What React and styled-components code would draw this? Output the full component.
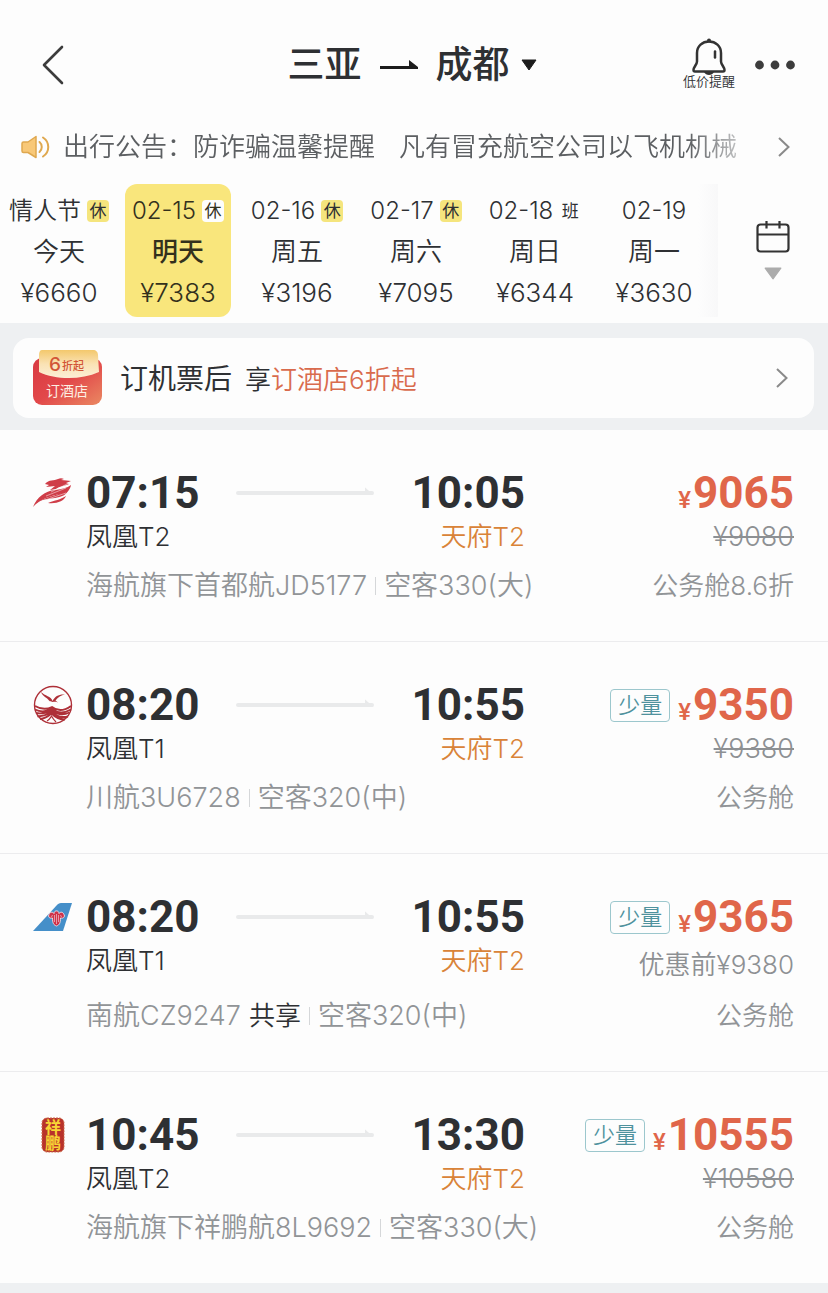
import React, { useState } from "react";
import styled, { createGlobalStyle, css } from "styled-components";

const GlobalStyle = createGlobalStyle`
  * {
    box-sizing: border-box;
  }
  body {
    margin: 0;
    background-color: #eef0f2;
    color: #2e3033;
    font-family: Inter, "Noto Sans CJK SC", sans-serif;
    font-size: 26px;
    font-weight: 350;
  }
  button {
    padding: 0;
    border: 0;
    background: none;
    color: inherit;
    font: inherit;
    cursor: pointer;
  }
  a {
    color: inherit;
    text-decoration: none;
  }
  svg {
    display: block;
    flex-shrink: 0;
  }
`;

const Top = styled.div`
  padding-bottom: 6px;
  background-color: #fdfdfd;
`;

const Header = styled.header`
  display: grid;
  grid-template-columns: 1fr auto 1fr;
  align-items: center;
  height: 124px;
  padding: 6px 32px 0 28px;
`;

const BackButton = styled.button`
  justify-self: start;
  padding-left: 14px;
`;

const RouteButton = styled.button`
  display: flex;
  align-items: center;
  gap: 18px;
`;

const City = styled.span`
  font-size: 37px;
  line-height: 48px;
  font-weight: 500;
`;

const Destination = styled.span`
  display: flex;
  align-items: center;
  gap: 11px;
`;

const HeaderActions = styled.div`
  display: flex;
  align-items: center;
  justify-content: flex-end;
  gap: 19px;
`;

const AlertButton = styled.button`
  display: flex;
  flex-direction: column;
  align-items: center;
  padding-bottom: 6px;
  font-size: 13px;
  line-height: 12px;
`;

const Notice = styled.a`
  display: flex;
  align-items: center;
  height: 46px;
  padding: 0 38px 0 21px;
  color: #5c5f62;
`;

const NoticeText = styled.span`
  display: flex;
  flex: 1;
  gap: 24px;
  margin: 0 36px 0 13px;
  overflow: hidden;
  line-height: 40px;
  white-space: nowrap;
  mask-image: linear-gradient(to right, #000 92%, transparent 104%);
`;

const DateBar = styled.nav`
  display: flex;
  margin-top: 14px;
`;

const Dates = styled.div`
  display: grid;
  flex: 1;
  grid-template-columns: repeat(6, minmax(0, 1fr));
  column-gap: 13px;
  padding: 0 11px 0 6px;
  background: linear-gradient(to left, #f8f8f9, #fdfdfd 20px);
`;

const DateTab = styled.button`
  display: flex;
  flex-direction: column;
  align-items: center;
  padding: 6px 0 4px;
  border-radius: 12px;
  font-size: 24px;
  line-height: 41px;
  white-space: nowrap;
  ${(props) =>
    props.$active &&
    css`
      background-color: #f9e67c;
      color: #33301c;
    `}
`;

const DateLine = styled.span`
  display: flex;
  align-items: center;
  gap: 6px;
`;

const Weekday = styled.span`
  font-size: 26px;
  font-weight: ${(props) => (props.$active ? 500 : 350)};
`;

const DayPrice = styled.span`
  font-size: 26px;
`;

const Tag = styled.span`
  width: 22px;
  border-radius: 4px;
  background-color: ${(props) => props.$bg};
  font-size: 17px;
  line-height: 22px;
  font-weight: 400;
  text-align: center;
`;

const CalendarButton = styled.button`
  display: flex;
  flex-direction: column;
  align-items: center;
  justify-content: center;
  gap: 14px;
  width: 110px;
`;

const Promo = styled.a`
  display: flex;
  align-items: center;
  height: 80px;
  margin: 15px 14px 12px 13px;
  padding: 0 26px 0 20px;
  border-radius: 16px;
  background-color: #fdfdfd;
`;

const PromoText = styled.span`
  flex: 1;
  margin-left: 18px;
  padding-top: 3px;
  line-height: 40px;
`;

const PromoTitle = styled.strong`
  margin-right: 13px;
  font-size: 28px;
  font-weight: 400;
`;

const Highlight = styled.span`
  color: #d96b4d;
`;

const Flights = styled.ul`
  margin: 0 0 10px;
  padding: 0;
  list-style: none;
`;

const Flight = styled.li`
  display: flex;
  padding: 39px 34px 35px 33px;
  background-color: #fdfdfd;
  & + & {
    border-top: 1px solid #ececee;
  }
`;

const Logo = styled.div`
  display: flex;
  align-items: center;
  justify-content: center;
  width: 40px;
  height: 48px;
  margin-right: 13px;
`;

const Info = styled.div`
  flex: 1;
`;

const Line = styled.div`
  display: flex;
  align-items: flex-start;
  justify-content: space-between;
  line-height: 40px;
  white-space: nowrap;
`;

const DetailLine = styled(Line)`
  margin-top: ${(props) => (props.$tight ? 7 : 9)}px;
  color: #919497;
`;

const Route = styled.div`
  display: flex;
  flex: 0 0 62%;
  align-items: center;
  justify-content: space-between;
`;

const Time = styled.time`
  font-family: Roboto, sans-serif;
  font-size: 44px;
  line-height: 48px;
  font-weight: 700;
`;

const RouteArrow = styled.span`
  position: relative;
  flex: 1;
  height: 4px;
  margin: 0 38px 0 37px;
  border-radius: 2px;
  background-color: #e9eaeb;
  &::after {
    content: "";
    position: absolute;
    right: 0;
    bottom: 0;
    width: 9px;
    height: 8px;
    background-color: #e9eaeb;
    clip-path: polygon(0 0, 100% 100%, 0 100%);
  }
`;

const Arrival = styled.span`
  color: #d98338;
`;

const Price = styled.strong`
  display: flex;
  align-items: baseline;
  color: #e0664a;
  font-family: Roboto, sans-serif;
  font-size: 44px;
  line-height: 48px;
  font-weight: 700;
`;

const Currency = styled.span`
  margin-right: 2px;
  font-size: 24px;
  line-height: 24px;
  font-weight: 500;
`;

const Fare = styled.div`
  display: flex;
  align-items: center;
  gap: 8px;
`;

const Few = styled.span`
  padding: 0 7px;
  border: 1px solid #9cc7cd;
  border-radius: 4px;
  color: #4f929d;
  font-size: 22px;
  line-height: 31px;
`;

const OldPrice = styled.del`
  color: #8d9093;
  font-size: 27px;
`;

const BeforeDiscount = styled.span`
  color: #8d9093;
  line-height: 48px;
`;

const Details = styled.span`
  display: flex;
  align-items: center;
  font-size: 27px;
`;

const Shared = styled.span`
  margin-left: 8px;
  color: #2e3033;
  font-size: 26px;
`;

const Divider = styled.span`
  width: 1px;
  height: 18px;
  margin: 0 8px;
  background-color: #d5d7d9;
`;

const ChevronRight = ({ color }) => (
  <svg width="12" height="20" viewBox="0 0 12 20" fill="none" stroke={color} strokeWidth="2">
    <path d="M1 1l9.500 9L1 19" />
  </svg>
);

const BackIcon = () => (
  <svg width="22" height="40" viewBox="0 0 22 40" fill="none" stroke="#3c3c3c" strokeWidth="2.600" strokeLinecap="round" strokeLinejoin="round">
    <path d="M20 2L2 20l18 18" />
  </svg>
);

const TitleArrow = () => (
  <svg width="38" height="10" viewBox="0 0 38 10" fill="#1c1c1c">
    <path d="M0 6h29V0l9 7v2H0z" />
  </svg>
);

const Caret = ({ width, height, color }) => (
  <svg width={width} height={height} viewBox="0 0 16 12" preserveAspectRatio="none">
    <path d="M1 1h14L8 11z" fill={color} stroke={color} strokeLinejoin="round" />
  </svg>
);

const BellIcon = () => (
  <svg width="34" height="37" viewBox="0 0 34 37" fill="none" stroke="#333" strokeWidth="2.500" strokeLinecap="round" strokeLinejoin="round">
    <path d="M17 3.500C10.500 3.500 5 8 5 15v8.500c0 3-3.500 5.500-3.500 8.500 0 1 .6 1.500 1.500 1.500h28c.9 0 1.500-.5 1.500-1.500 0-3-3.500-5.500-3.500-8.500V15c0-7-5.500-11.500-12-11.500z" />
    <path d="M23 13.500v6" />
    <circle cx="17" cy="2.500" r="2" fill="#333" stroke="none" />
    <path d="M12 34h10c-1 2-2.800 3-5 3s-4-1-5-3z" fill="#333" stroke="none" />
  </svg>
);

const MoreIcon = () => (
  <svg width="42" height="10" viewBox="0 0 42 10" fill="#3c3c3c">
    <circle cx="5.500" cy="5" r="4.400" />
    <circle cx="21" cy="5" r="4.400" />
    <circle cx="36.500" cy="5" r="4.400" />
  </svg>
);

const SpeakerIcon = () => (
  <svg width="29" height="24" viewBox="0 0 29 24" fill="none" stroke="#dfa84f" strokeWidth="2" strokeLinecap="round" strokeLinejoin="round">
    <path d="M2.500 7h4.500l8-5.500v21L7 17.500H2.500c-.8 0-1.500-.7-1.500-1.500V8.500C1 7.700 1.700 7 2.500 7z" fill="#f8c878" strokeWidth="1.500" />
    <path d="M18.500 7c3 2.500 3 7.500 0 10" />
    <path d="M22 2.500c7 4.500 7 14.500 0 19" />
  </svg>
);

const CalendarIcon = () => (
  <svg width="34" height="32" viewBox="0 0 34 32" fill="none" stroke="#333" strokeWidth="2.200">
    <rect x="1.500" y="3.500" width="31" height="27" rx="3" />
    <path d="M1.500 13.500h31M10.500 0v7.500M23.500 0v7.500" />
  </svg>
);

const CouponIcon = () => (
  <svg width="69" height="56" viewBox="0 0 69 56">
    <defs>
      <linearGradient id="couponRed" x1="0" y1="0" x2="1" y2="1">
        <stop offset="0" stopColor="#d83a42" />
        <stop offset="0.5" stopColor="#e2484a" />
        <stop offset="1" stopColor="#ea8962" />
      </linearGradient>
      <linearGradient id="couponFlap" x1="0" y1="0" x2="0" y2="1">
        <stop offset="0" stopColor="#f3c86c" />
        <stop offset="0.5" stopColor="#fae2b4" />
        <stop offset="1" stopColor="#fceed6" />
      </linearGradient>
    </defs>
    <rect y="8" width="69" height="47" rx="9" fill="url(#couponRed)" />
    <path d="M9 0h51c3 0 5 2 5 5l1 17c-18 8-43 8-60 0V5c0-3 1-5 3-5z" fill="url(#couponFlap)" />
    <text x="16" y="21" fill="#d25536" fontSize="19" fontWeight="500">6</text>
    <text x="29" y="20" fill="#d25536" fontSize="11" fontWeight="500">折起</text>
    <text x="34" y="46" fill="#fdf0e4" fontSize="14" fontWeight="400" textAnchor="middle">订酒店</text>
  </svg>
);

const CapitalLogo = () => (
  <svg width="40" height="30" viewBox="0 0 40 30" fill="#cf3d48">
    <path d="M0 29C4 19 12 13 22 12c7-1 12-2 16-5-1 6-5 8-11 9-10 2-20 5-27 13z" />
    <path d="M7 23c8-5 18-5 29-12-2 6-8 8-14 9-6 1-10 1-15 3z" />
    <path d="M15 25c7-3 12-3 18-7-2 5-9 8-18 7z" />
    <path d="M12 6c4-5 9-3 13-5 2-1 4-1 6 0l-3 1c4 0 7 1 10 1l-5 2 3 1c-5 2-9 2-13 5l-6 1 5-4-9 1 3-2z" />
    <path d="M18 14l18-9M13 18l20-8M9 23l24-8" stroke="#fdfdfd" strokeWidth="0.500" fill="none" />
  </svg>
);

const SichuanLogo = () => (
  <svg width="40" height="40" viewBox="0 0 40 40" fill="none" stroke="#ae3038">
    <circle cx="20" cy="20" r="18.500" strokeWidth="1.400" />
    <path d="M8 7c4 4 10 4 11.500 9C22 11 26 9 32 9.500c-4 .8-7 2.500-9.500 6L25 17.500c-3.500-1.500-7 .5-9-2C14 12.500 10 12 8 7z" fill="#ae3038" stroke="none" />
    <path d="M2 21c7 4 12 3.500 17 1 5 4 12 4 19-1M2 24.500c7 3.500 12 1.500 17-.5 5 4 12 4.500 19 .5M3 28c6 1.500 11-.5 16-2.500 5 4 11 5 17.500 2M4.500 31.200c6 .5 10-1.700 14-4.200 4 4 10 6 16.500 4.500M7 34c5-.5 8-2.500 11.500-5.500C22 32 26 34.500 32 34.500" strokeWidth="1.900" />
    <path d="M14 36c2.500-1 3-3 4.500-5 1 2 2.500 4 4.500 6" strokeWidth="1.200" />
  </svg>
);

const SouthernLogo = () => (
  <svg width="40" height="28" viewBox="0 0 40 28">
    <path d="M0 28L24 2c1-1 2-2 4-2h11L30 28z" fill="#458fc9" />
    <path d="M15.500 13c1-4.500 4-4.500 5.500-2.500 0-3.500 5-3.500 5 0 1.500-2 4.500-2 5.500 2.500-1 3-3 2-4 2 0 5-1 7-4 8-3-1-4-3-4-8-1 0-3 1-4-2z" fill="#cf3149" stroke="#f1dfe5" strokeWidth="0.900" />
    <path d="M21.500 12v7M23.500 11v10M25.500 12v7M18 13.500l2-1M29 13.500l-2-1" stroke="#f1dfe5" strokeWidth="0.600" />
  </svg>
);

const VerticalName = styled.text`
  writing-mode: vertical-rl;
  font-size: 16px;
  font-weight: 700;
  text-anchor: middle;
  fill: #f8d535;
`;

const LuckyLogo = () => (
  <svg width="24" height="36" viewBox="0 0 24 36">
    <rect x="1" y="1" width="22" height="34" rx="5" fill="#b8322b" stroke="#cc6a48" strokeDasharray="2 1" />
    <VerticalName x="11" y="18">祥鹏</VerticalName>
  </svg>
);

const days = [
  { date: "情人节", weekday: "今天", price: "¥6660", tag: "休" },
  { date: "02-15", weekday: "明天", price: "¥7383", tag: "休" },
  { date: "02-16", weekday: "周五", price: "¥3196", tag: "休" },
  { date: "02-17", weekday: "周六", price: "¥7095", tag: "休" },
  { date: "02-18", weekday: "周日", price: "¥6344", tag: "班" },
  { date: "02-19", weekday: "周一", price: "¥3630" },
];

const flights = [
  {
    logo: CapitalLogo,
    depart: "07:15",
    arrive: "10:05",
    from: "凤凰T2",
    number: "海航旗下首都航JD5177",
    plane: "空客330(大)",
    price: "9065",
    oldPrice: "¥9080",
    cabin: "公务舱8.6折",
  },
  {
    logo: SichuanLogo,
    depart: "08:20",
    arrive: "10:55",
    from: "凤凰T1",
    number: "川航3U6728",
    plane: "空客320(中)",
    few: true,
    price: "9350",
    oldPrice: "¥9380",
    cabin: "公务舱",
  },
  {
    logo: SouthernLogo,
    depart: "08:20",
    arrive: "10:55",
    from: "凤凰T1",
    number: "南航CZ9247",
    shared: true,
    plane: "空客320(中)",
    few: true,
    price: "9365",
    beforeDiscount: "优惠前¥9380",
    cabin: "公务舱",
  },
  {
    logo: LuckyLogo,
    depart: "10:45",
    arrive: "13:30",
    from: "凤凰T2",
    number: "海航旗下祥鹏航8L9692",
    plane: "空客330(大)",
    few: true,
    price: "10555",
    oldPrice: "¥10580",
    cabin: "公务舱",
  },
];

const tagColor = (tag, active) =>
  active ? "#fdfdfd" : tag === "休" ? "#f5e57d" : "transparent";

const FlightRow = ({ flight }) => (
  <Flight>
    <Logo>
      <flight.logo />
    </Logo>
    <Info>
      <Line>
        <Route>
          <Time>{flight.depart}</Time>
          <RouteArrow />
          <Time>{flight.arrive}</Time>
        </Route>
        <Fare>
          {flight.few && <Few>少量</Few>}
          <Price>
            <Currency>¥</Currency>
            {flight.price}
          </Price>
        </Fare>
      </Line>
      <Line>
        <Route>
          <span>{flight.from}</span>
          <Arrival>天府T2</Arrival>
        </Route>
        {flight.oldPrice && <OldPrice>{flight.oldPrice}</OldPrice>}
        {flight.beforeDiscount && (
          <BeforeDiscount>{flight.beforeDiscount}</BeforeDiscount>
        )}
      </Line>
      <DetailLine $tight={!!flight.beforeDiscount}>
        <Details>
          {flight.number}
          {flight.shared && <Shared>共享</Shared>}
          <Divider />
          {flight.plane}
        </Details>
        <span>{flight.cabin}</span>
      </DetailLine>
    </Info>
  </Flight>
);

const App = () => {
  const [selected, setSelected] = useState(1);

  return (
    <>
      <GlobalStyle />
      <Top>
        <Header>
          <BackButton aria-label="返回">
            <BackIcon />
          </BackButton>
          <RouteButton>
            <City>三亚</City>
            <TitleArrow />
            <Destination>
              <City>成都</City>
              <Caret width={16} height={12} color="#1c1c1c" />
            </Destination>
          </RouteButton>
          <HeaderActions>
            <AlertButton>
              <BellIcon />
              低价提醒
            </AlertButton>
            <button aria-label="更多">
              <MoreIcon />
            </button>
          </HeaderActions>
        </Header>
        <Notice href="#notice">
          <SpeakerIcon />
          <NoticeText>
            <span>出行公告：防诈骗温馨提醒</span>
            <span>凡有冒充航空公司以飞机机械</span>
          </NoticeText>
          <ChevronRight color="#8a8a8a" />
        </Notice>
        <DateBar>
          <Dates>
            {days.map((day, index) => (
              <DateTab
                key={day.date}
                $active={index === selected}
                onClick={() => setSelected(index)}
              >
                <DateLine>
                  {day.date}
                  {day.tag && (
                    <Tag $bg={tagColor(day.tag, index === selected)}>
                      {day.tag}
                    </Tag>
                  )}
                </DateLine>
                <Weekday $active={index === selected}>{day.weekday}</Weekday>
                <DayPrice>{day.price}</DayPrice>
              </DateTab>
            ))}
          </Dates>
          <CalendarButton aria-label="日历">
            <CalendarIcon />
            <Caret width={18} height={13} color="#acacac" />
          </CalendarButton>
        </DateBar>
      </Top>
      <Promo href="#hotel">
        <CouponIcon />
        <PromoText>
          <PromoTitle>订机票后</PromoTitle>享<Highlight>订酒店6折起</Highlight>
        </PromoText>
        <ChevronRight color="#8a8a8a" />
      </Promo>
      <Flights>
        {flights.map((flight) => (
          <FlightRow key={flight.number} flight={flight} />
        ))}
      </Flights>
    </>
  );
};

export default App;
